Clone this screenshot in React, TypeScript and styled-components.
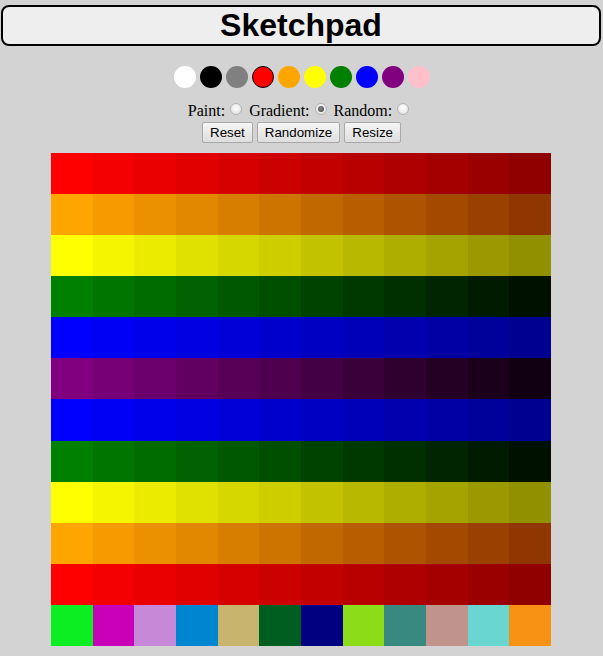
import React, { useState } from "react";
import styled, { createGlobalStyle } from "styled-components";

const GlobalStyle = createGlobalStyle`
  html, body { margin: 0; padding: 0; }
  body {
    background: #d3d3d3;
    font-family: "Liberation Serif", "Times New Roman", serif;
    font-size: 16px;
  }
`;

const Page = styled.div`
  display: flex;
  flex-direction: column;
  align-items: center;
  padding-top: 5px;
`;

const Title = styled.h1`
  box-sizing: border-box;
  align-self: stretch;
  margin: 0 2px 0 1px;
  height: 41px;
  border: 2px solid #000;
  border-radius: 8px;
  background: #eeeeee;
  font: bold 32px/37px "Liberation Sans", Arial, sans-serif;
  text-align: center;
`;

const Palette = styled.div`
  display: flex;
  gap: 4px;
  margin-top: 20px;
`;

const Swatch = styled.div<{ $c: string; $sel?: boolean }>`
  box-sizing: border-box;
  width: 22px;
  height: 22px;
  border-radius: 50%;
  background: ${(p) => p.$c};
  border: ${(p) => (p.$sel ? "1px solid #000" : "none")};
  cursor: pointer;
`;

const ModeRow = styled.div`
  margin-top: 13px;
  margin-right: 3px;
  line-height: 19px;
  display: flex;
  align-items: center;
`;

const ModeLabel = styled.label`
  display: inline-flex;
  align-items: center;
  margin: 0 2px;
`;

const Radio = styled.input`
  appearance: none;
  box-sizing: border-box;
  width: 12px;
  height: 12px;
  margin: -3px 3px 0 5px;
  border-radius: 50%;
  border: 1px solid #b4b4b4;
  background: radial-gradient(circle at 50% 40%, #ffffff 0%, #f0f0f0 45%, #d8d8d8 100%);
  display: grid;
  place-items: center;
  &:checked::after {
    content: "";
    width: 6px;
    height: 6px;
    border-radius: 50%;
    background: radial-gradient(circle at 45% 40%, #8a8a8a, #3a3a3a);
  }
`;

const ButtonRow = styled.div`
  display: flex;
  gap: 4px;
  margin-top: 2px;
`;

const Btn = styled.button`
  box-sizing: border-box;
  height: 21px;
  padding: 0 7px;
  border: 1px solid #a9a9a9;
  border-radius: 2px;
  background: linear-gradient(#f6f6f6, #dedede);
  font: 13.33px "Liberation Sans", Arial, sans-serif;
  color: #000;
`;

const Grid = styled.div`
  margin: 10px 1px 0 0;
  width: 500px;
  height: 493px;
  display: grid;
  grid-template-columns: repeat(12, 1fr);
  grid-template-rows: repeat(12, 1fr);
`;

const Cell = styled.div.attrs<{ $c: string }>((p) => ({
  style: { background: p.$c },
}))<{ $c: string }>``;

const palette = [
  "#ffffff",
  "#000000",
  "#808080",
  "#ff0000",
  "#ffa500",
  "#ffff00",
  "#008000",
  "#0000ff",
  "#800080",
  "#ffc0cb",
];

const rows: [number, number, number][] = [
  [255, 0, 0],
  [255, 165, 0],
  [255, 255, 0],
  [0, 128, 0],
  [0, 0, 255],
  [128, 0, 128],
  [0, 0, 255],
  [0, 128, 0],
  [255, 255, 0],
  [255, 165, 0],
  [255, 0, 0],
];

const randomRow = [
  "#0cee22",
  "#c800b8",
  "#c888d8",
  "#0085d0",
  "#c8b46c",
  "#005f20",
  "#000080",
  "#8cdc18",
  "#388a80",
  "#c0948c",
  "#6ad6d2",
  "#f89214",
];

const shade = (rgb: [number, number, number], i: number) => {
  const [r, g, b] = rgb.map((c) => Math.max(0, Math.round(c - 10.1 * i)));
  return `rgb(${r}, ${g}, ${b})`;
};

export default function App() {
  const [selected, setSelected] = useState(3);
  const [mode, setMode] = useState("gradient");

  const cells: string[] = [];
  rows.forEach((rgb) => {
    for (let i = 0; i < 12; i++) cells.push(shade(rgb, i));
  });
  cells.push(...randomRow);

  return (
    <>
      <GlobalStyle />
      <Page>
        <Title>Sketchpad</Title>
        <Palette>
          {palette.map((c, i) => (
            <Swatch key={c} $c={c} $sel={i === selected} onClick={() => setSelected(i)} />
          ))}
        </Palette>
        <ModeRow>
          {[
            ["paint", "Paint:"],
            ["gradient", "Gradient:"],
            ["random", "Random:"],
          ].map(([k, label]) => (
            <ModeLabel key={k}>
              {label}
              <Radio
                type="radio"
                name="mode"
                checked={mode === k}
                onChange={() => setMode(k)}
              />
            </ModeLabel>
          ))}
        </ModeRow>
        <ButtonRow>
          <Btn>Reset</Btn>
          <Btn>Randomize</Btn>
          <Btn>Resize</Btn>
        </ButtonRow>
        <Grid>
          {cells.map((c, i) => (
            <Cell key={i} $c={c} />
          ))}
        </Grid>
      </Page>
    </>
  );
}
